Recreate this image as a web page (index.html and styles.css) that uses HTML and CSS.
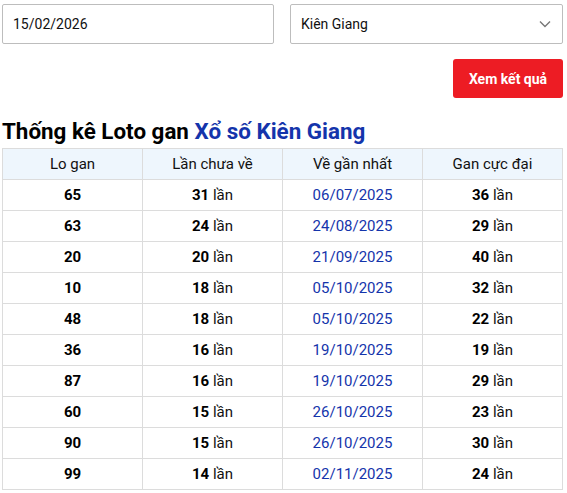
FILE: index.html
```html
<!DOCTYPE html>
<html lang="vi">
<head>
<meta charset="utf-8">
<link rel="stylesheet" href="styles.css">
</head>
<body>
<div class="page">
  <div class="filters">
    <div class="field">15/02/2026</div>
    <div class="field select">
      <span>Kiên Giang</span>
      <svg class="chev" width="12" height="8" viewBox="0 0 12 8"><path d="M1 1.5 L6 6.5 L11 1.5" fill="none" stroke="#777" stroke-width="1.4"/></svg>
    </div>
  </div>
  <div class="actions"><button class="btn">Xem kết quả</button></div>
  <h1 class="title">Thống kê Loto gan <span class="blue">Xổ số Kiên Giang</span></h1>
  <table class="stats">
    <thead>
      <tr><th>Lo gan</th><th>Lần chưa về</th><th>Về gần nhất</th><th>Gan cực đại</th></tr>
    </thead>
    <tbody>
      <tr><td><b>65</b></td><td><b>31</b> lần</td><td class="date">06/07/2025</td><td><b>36</b> lần</td></tr>
      <tr><td><b>63</b></td><td><b>24</b> lần</td><td class="date">24/08/2025</td><td><b>29</b> lần</td></tr>
      <tr><td><b>20</b></td><td><b>20</b> lần</td><td class="date">21/09/2025</td><td><b>40</b> lần</td></tr>
      <tr><td><b>10</b></td><td><b>18</b> lần</td><td class="date">05/10/2025</td><td><b>32</b> lần</td></tr>
      <tr><td><b>48</b></td><td><b>18</b> lần</td><td class="date">05/10/2025</td><td><b>22</b> lần</td></tr>
      <tr><td><b>36</b></td><td><b>16</b> lần</td><td class="date">19/10/2025</td><td><b>19</b> lần</td></tr>
      <tr><td><b>87</b></td><td><b>16</b> lần</td><td class="date">19/10/2025</td><td><b>29</b> lần</td></tr>
      <tr><td><b>60</b></td><td><b>15</b> lần</td><td class="date">26/10/2025</td><td><b>23</b> lần</td></tr>
      <tr><td><b>90</b></td><td><b>15</b> lần</td><td class="date">26/10/2025</td><td><b>30</b> lần</td></tr>
      <tr><td><b>99</b></td><td><b>14</b> lần</td><td class="date">02/11/2025</td><td><b>24</b> lần</td></tr>
    </tbody>
  </table>
</div>
</body>
</html>
```

FILE: styles.css
```css
* { box-sizing: border-box; }
html, body { margin: 0; padding: 0; background: #fff; }
body { font-family: Roboto, "Liberation Sans", sans-serif; color: #111; }
.page { width: 561px; margin-left: 2px; padding-top: 4px; }
.filters { display: grid; grid-template-columns: 272px 273px; column-gap: 16px; justify-content: space-between; }
.field {
  height: 40px; border: 1px solid #bdbdbd; border-radius: 2px;
  display: flex; align-items: center; padding: 0 11px 0 10px;
  font-size: 14px; color: #111;
}
.select { justify-content: space-between; }
.actions { display: flex; justify-content: flex-end; padding-top: 15px; }
.btn {
  width: 110px; height: 39px; border: 0; border-radius: 3px;
  background: #ed1c24; color: #fff; font-family: Roboto, sans-serif;
  font-weight: 700; font-size: 14px; padding: 0;
}
.title { margin: 19px 0 0; font-size: 22.4px; font-weight: 700; line-height: 28px; color: #000; }
.blue { color: #1434ab; }
.stats { width: 561px; border-collapse: collapse; table-layout: fixed; margin-top: 3px; }
.stats th, .stats td { border: 1px solid #dcdcdc; height: 31px; text-align: center; font-size: 15px; padding: 0; }
.stats th { background: #eef6fd; font-weight: 400; color: #111; }
.stats td { color: #111; }
.stats td b { font-weight: 700; color: #000; }
.stats td.date { color: #1434ab; }
```
